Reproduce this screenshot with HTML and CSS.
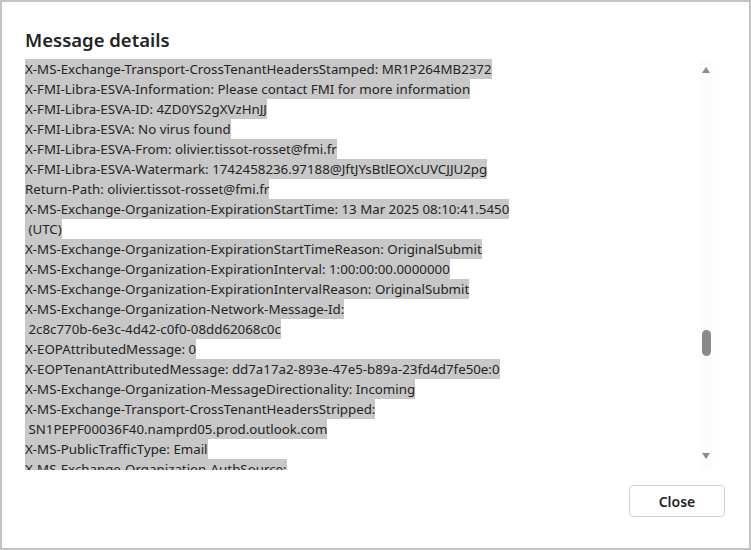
FILE: index.html
```html
<!DOCTYPE html>
<html>

<head>
    <meta charset="UTF-8">
    <title>Message details</title>
    <link rel="stylesheet" href="styles.css">
</head>

<body>
    <div class="dialog">
        <h2 class="dialog-title">Message details</h2>
        <div class="dialog-body">
            <div class="headers">
                <div class="line">X-MS-Exchange-Transport-CrossTenantHeadersStamped: MR1P264MB2372</div>
                <div class="line">X-FMI-Libra-ESVA-Information: Please contact FMI for more information</div>
                <div class="line">X-FMI-Libra-ESVA-ID: 4ZD0YS2gXVzHnJJ</div>
                <div class="line">X-FMI-Libra-ESVA: No virus found</div>
                <div class="line">X-FMI-Libra-ESVA-From: olivier.tissot-rosset@fmi.fr</div>
                <div class="line">X-FMI-Libra-ESVA-Watermark: 1742458236.97188@JftJYsBtlEOXcUVCJJU2pg</div>
                <div class="line">Return-Path: olivier.tissot-rosset@fmi.fr</div>
                <div class="line">X-MS-Exchange-Organization-ExpirationStartTime: 13 Mar 2025 08:10:41.5450</div>
                <div class="line"> (UTC)</div>
                <div class="line">X-MS-Exchange-Organization-ExpirationStartTimeReason: OriginalSubmit</div>
                <div class="line">X-MS-Exchange-Organization-ExpirationInterval: 1:00:00:00.0000000</div>
                <div class="line">X-MS-Exchange-Organization-ExpirationIntervalReason: OriginalSubmit</div>
                <div class="line">X-MS-Exchange-Organization-Network-Message-Id:</div>
                <div class="line"> 2c8c770b-6e3c-4d42-c0f0-08dd62068c0c</div>
                <div class="line">X-EOPAttributedMessage: 0</div>
                <div class="line">X-EOPTenantAttributedMessage: dd7a17a2-893e-47e5-b89a-23fd4d7fe50e:0</div>
                <div class="line">X-MS-Exchange-Organization-MessageDirectionality: Incoming</div>
                <div class="line">X-MS-Exchange-Transport-CrossTenantHeadersStripped:</div>
                <div class="line"> SN1PEPF00036F40.namprd05.prod.outlook.com</div>
                <div class="line">X-MS-PublicTrafficType: Email</div>
                <div class="line">X-MS-Exchange-Organization-AuthSource:</div>
            </div>
            <div class="scrollbar">
                <svg class="arrow" width="10" height="8" viewBox="0 0 10 8"><path d="M5 1 L9 7 L1 7 Z" fill="#8a8a8a"/></svg>
                <div class="track">
                    <div class="thumb"></div>
                </div>
                <svg class="arrow" width="10" height="8" viewBox="0 0 10 8"><path d="M1 1 L9 1 L5 7 Z" fill="#8a8a8a"/></svg>
            </div>
        </div>
        <div class="dialog-footer">
            <button class="close-button">Close</button>
        </div>
    </div>
</body>

</html>
```

FILE: styles.css
```css
/* Message details dialog */
body {
    font-family: "Noto Sans", "Open Sans", sans-serif;
    margin: 0;
    padding: 0;
    background-color: #fff;
}

.dialog {
    width: 751px;
    height: 550px;
    box-sizing: border-box;
    border: 2px solid #c3c3c3;
    padding: 24px 24px 0 23px;
    display: flex;
    flex-direction: column;
    color: #242424;
}

.dialog-title {
    font-size: 18.5px;
    font-weight: 600;
    line-height: 28px;
    margin: 0 0 5px 0;
}

.dialog-body {
    height: 411px;
    display: flex;
    overflow: hidden;
}

.headers {
    flex: 1;
    font-size: 13.3px;
    line-height: 20px;
    overflow: hidden;
}

.line {
    width: fit-content;
    white-space: pre;
    background-color: #c8c8c8;
}

.scrollbar {
    width: 14px;
    margin-right: 12px;
    display: flex;
    flex-direction: column;
    align-items: center;
    background-color: #fcfcfc;
    padding: 7px 0 10px 0;
}

.arrow {
    display: block;
}

.track {
    flex: 1;
    padding-top: 256px;
}

.thumb {
    width: 9px;
    height: 26px;
    border-radius: 5px;
    background-color: #8a8a8a;
}

.dialog-footer {
    display: flex;
    justify-content: flex-end;
    padding-top: 15px;
}

.close-button {
    width: 96px;
    height: 32px;
    background-color: #fff;
    border: 1px solid #d1d1d1;
    border-radius: 4px;
    font-family: "Noto Sans", "Open Sans", sans-serif;
    font-size: 14px;
    font-weight: 600;
    color: #242424;
}
```
